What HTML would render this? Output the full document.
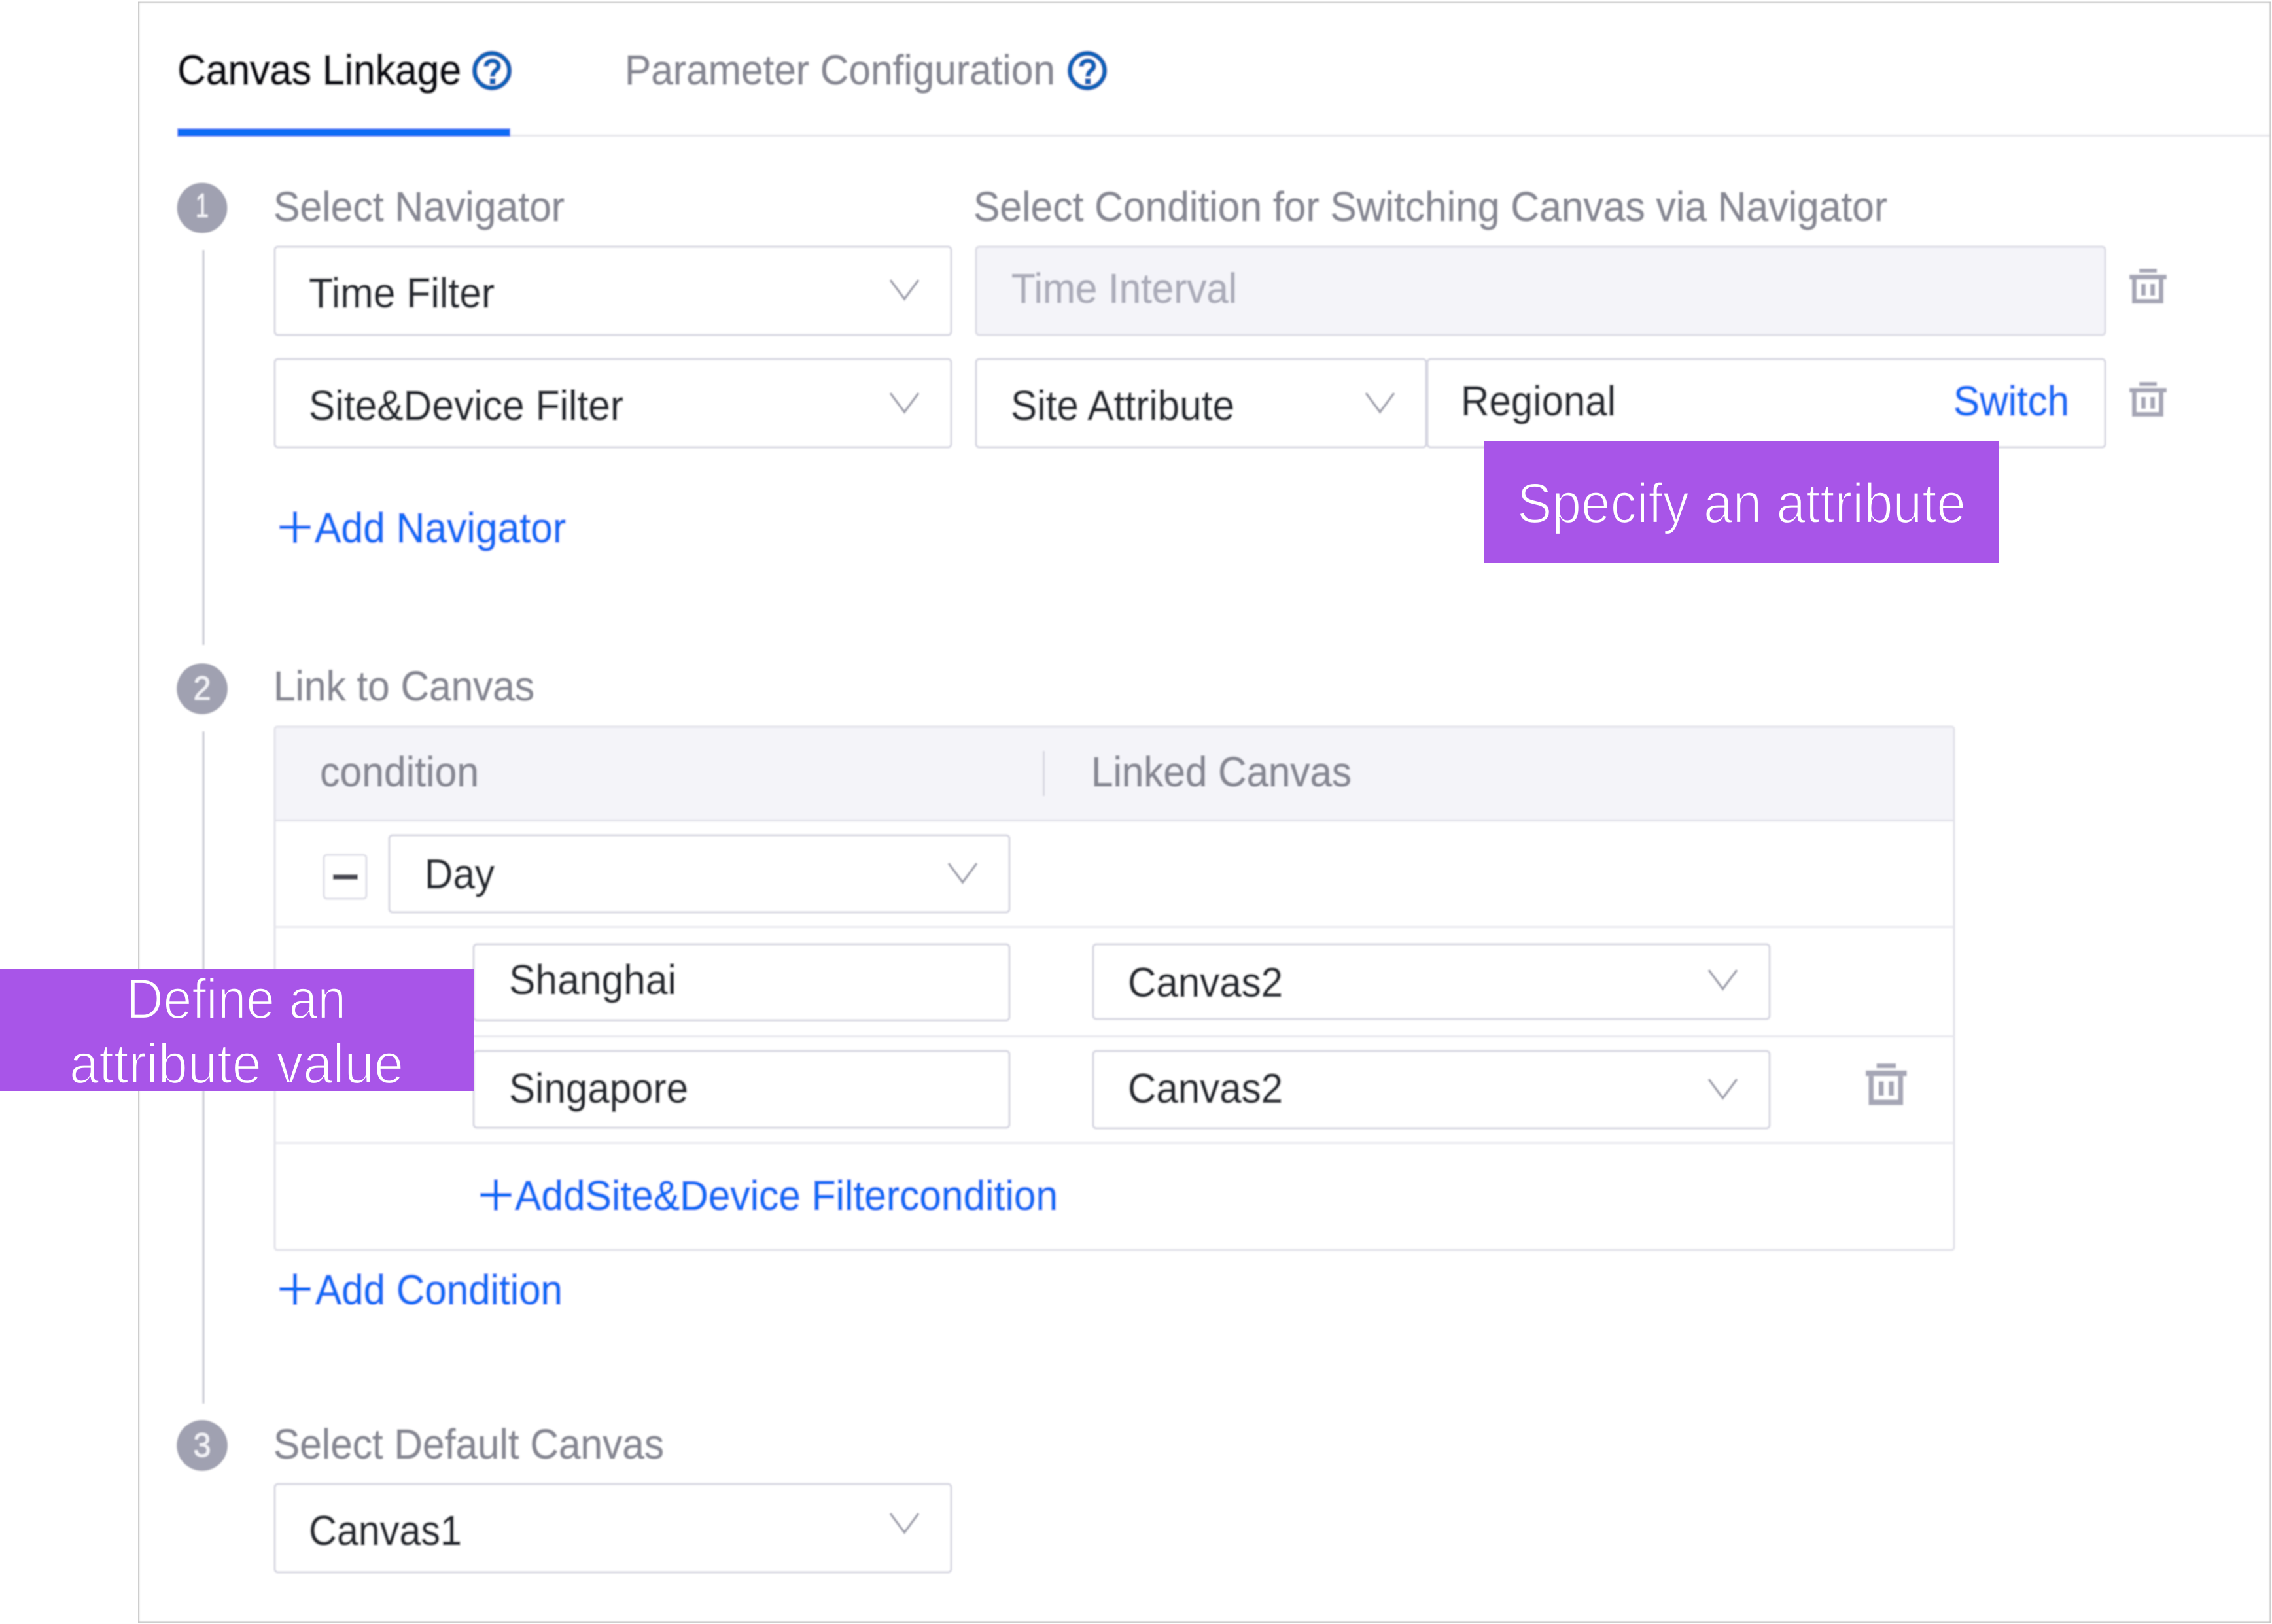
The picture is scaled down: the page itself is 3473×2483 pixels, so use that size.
<!DOCTYPE html>
<html lang="en">
<head>
<meta charset="utf-8">
<title>Canvas Linkage</title>
<style>
html,body{margin:0;padding:0;background:#fff;width:3473px;height:2483px;overflow:hidden}
svg{display:block}
text{font-family:"Liberation Sans",Arial,sans-serif;font-size:64px;white-space:pre}
.g{fill:#868793;stroke:#868793;stroke-width:.7px}
.d{fill:#282931;stroke:#282931;stroke-width:.8px}
.b{fill:#0a6cf5;stroke:#0a6cf5;stroke-width:1px}
.f{fill:#abacb9;stroke:#abacb9;stroke-width:.6px}
.box{fill:#fff;stroke:#d6d6e1;stroke-width:3}
.p{fill:#fff;font-size:86px;stroke:#a855e8;stroke-width:2.200px}
.n{fill:#f2f2f6;stroke:#f2f2f6;stroke-width:.8px;font-size:52px}
</style>
</head>
<body>
<svg xmlns="http://www.w3.org/2000/svg" width="3473" height="2483" viewBox="0 0 3473 2483">
<defs>
<filter id="soft" x="0" y="0" width="100%" height="100%" filterUnits="objectBoundingBox"><feGaussianBlur stdDeviation="1"/></filter>
<g id="chev"><path d="M0 0L21.500 29L43 0" fill="none" stroke="#9c9daa" stroke-width="3.500"/></g>
<g id="trash" fill="#a5a6b5">
<rect x="15" y="0" width="27" height="6"/>
<rect x="0" y="9" width="57" height="7"/>
<path fill-rule="evenodd" d="M4 16H52V53H4ZM11 16V46H45V16Z"/>
<rect x="18" y="23" width="7" height="18"/>
<rect x="32" y="23" width="7" height="18"/>
</g>
<g id="q">
<circle cx="0" cy="0" r="26.500" fill="none" stroke="#0a62b8" stroke-width="7.500"/>
<path d="M-9 -6C-9 -18 10 -18 10 -7C10 0 1 -1 1 9" fill="none" stroke="#0a62b8" stroke-width="7.500"/>
<rect x="-3.500" y="12" width="9" height="9" fill="#0a62b8"/>
</g>
<g id="plus"><path d="M-24 0H24M0 -24V24" stroke="#0a6cf5" stroke-width="6" fill="none"/></g>
</defs>

<rect width="3473" height="2483" fill="#fff"/>
<g filter="url(#soft)">
<!-- outer frame -->
<path d="M211 2.500H3471V2481H211Z" fill="#fff" stroke="#c4c4c4" stroke-width="3.500"/>

<!-- tabs -->
<rect x="780" y="206" width="2689" height="3" fill="#e6e6eb"/>
<rect x="271" y="196" width="509" height="13" fill="#0a6cf5"/>
<text x="271" y="129" fill="#0e0f13" textLength="434" lengthAdjust="spacingAndGlyphs" style="stroke:#0e0f13;stroke-width:1.500px">Canvas Linkage</text>
<use href="#q" x="752" y="108"/>
<text x="955" y="129" class="g" textLength="658" lengthAdjust="spacingAndGlyphs">Parameter Configuration</text>
<use href="#q" x="1662" y="108"/>

<!-- step lines -->
<rect x="309.500" y="382" width="3" height="604" fill="#c6c7d1"/>
<rect x="309.500" y="1118" width="3" height="1028" fill="#c6c7d1"/>

<!-- step 1 -->
<circle cx="309" cy="318" r="38.500" fill="#a0a1b1"/>
<text x="309" y="332" class="n" text-anchor="middle" textLength="20" lengthAdjust="spacingAndGlyphs">1</text>
<text x="418" y="338" class="g" textLength="445" lengthAdjust="spacingAndGlyphs">Select Navigator</text>
<text x="1488" y="338" class="g" textLength="1397" lengthAdjust="spacingAndGlyphs">Select Condition for Switching Canvas via Navigator</text>

<rect class="box" x="420" y="377" width="1034" height="135" rx="5"/>
<text x="472" y="470" class="d" textLength="284" lengthAdjust="spacingAndGlyphs">Time Filter</text>
<use href="#chev" x="1361" y="428"/>

<rect x="1492" y="377" width="1726" height="135" rx="5" fill="#f4f4f9" stroke="#dcdce5" stroke-width="3"/>
<text x="1546" y="463" class="f" textLength="345" lengthAdjust="spacingAndGlyphs">Time Interval</text>
<use href="#trash" x="3255" y="411"/>

<rect class="box" x="420" y="549" width="1034" height="135" rx="5"/>
<text x="472" y="642" class="d" textLength="481" lengthAdjust="spacingAndGlyphs">Site&amp;Device Filter</text>
<use href="#chev" x="1361" y="601"/>

<rect class="box" x="1492" y="549" width="688" height="135" rx="5"/>
<text x="1545" y="642" class="d" textLength="342" lengthAdjust="spacingAndGlyphs">Site Attribute</text>
<use href="#chev" x="2088" y="601"/>

<rect class="box" x="2182" y="549" width="1036" height="135" rx="5"/>
<text x="2233" y="635" class="d" textLength="237" lengthAdjust="spacingAndGlyphs">Regional</text>
<text x="2986" y="635" class="b" textLength="177" lengthAdjust="spacingAndGlyphs">Switch</text>
<use href="#trash" x="3255" y="584"/>

<use href="#plus" x="451" y="806"/>
<text x="481" y="829" class="b" textLength="384" lengthAdjust="spacingAndGlyphs">Add Navigator</text>

<!-- step 2 -->
<circle cx="309" cy="1053" r="39" fill="#a0a1b1"/>
<text x="309" y="1070" class="n" text-anchor="middle" textLength="27" lengthAdjust="spacingAndGlyphs">2</text>
<text x="418" y="1071" class="g" textLength="399" lengthAdjust="spacingAndGlyphs">Link to Canvas</text>

<!-- table -->
<rect x="420" y="1111" width="2567" height="800" rx="4" fill="#fff" stroke="#e1e1e9" stroke-width="3"/>
<path d="M421.500 1254V1115Q421.500 1112.500 425 1112.500H2982Q2985.500 1112.500 2985.500 1115V1254Z" fill="#f4f4f9"/>
<rect x="420" y="1253" width="2567" height="3" fill="#e1e1e9"/>
<rect x="420" y="1416" width="2567" height="3" fill="#e7e7ee"/>
<rect x="420" y="1583" width="2567" height="3" fill="#e7e7ee"/>
<rect x="420" y="1746" width="2567" height="3" fill="#e7e7ee"/>
<rect x="1594" y="1148" width="3" height="69" fill="#d8d8e1"/>
<text x="489" y="1202" class="g" textLength="243" lengthAdjust="spacingAndGlyphs">condition</text>
<text x="1668" y="1202" class="g" textLength="398" lengthAdjust="spacingAndGlyphs">Linked Canvas</text>

<rect x="495" y="1307" width="65" height="67" rx="5" fill="#fff" stroke="#dedee7" stroke-width="3"/>
<rect x="509" y="1337" width="38" height="8" fill="#44454f"/>
<rect class="box" x="595" y="1277" width="948" height="118" rx="5"/>
<text x="649" y="1358" class="d" textLength="107" lengthAdjust="spacingAndGlyphs">Day</text>
<use href="#chev" x="1450" y="1320"/>

<rect class="box" x="724" y="1444" width="819" height="116" rx="5"/>
<text x="778" y="1520" class="d" textLength="256" lengthAdjust="spacingAndGlyphs">Shanghai</text>
<rect class="box" x="1671" y="1444" width="1034" height="114" rx="5"/>
<text x="1724" y="1524" class="d" textLength="237" lengthAdjust="spacingAndGlyphs">Canvas2</text>
<use href="#chev" x="2612" y="1483"/>

<rect class="box" x="724" y="1607" width="819" height="117" rx="5"/>
<text x="778" y="1686" class="d" textLength="274" lengthAdjust="spacingAndGlyphs">Singapore</text>
<rect class="box" x="1671" y="1607" width="1034" height="118" rx="5"/>
<text x="1724" y="1686" class="d" textLength="237" lengthAdjust="spacingAndGlyphs">Canvas2</text>
<use href="#chev" x="2612" y="1650"/>
<use href="#trash" transform="translate(2852 1626) scale(1.100 1.200)"/>

<use href="#plus" x="758" y="1827"/>
<text x="787" y="1850" class="b" textLength="830" lengthAdjust="spacingAndGlyphs">AddSite&amp;Device Filtercondition</text>

<use href="#plus" x="451" y="1971"/>
<text x="482" y="1994" class="b" textLength="378" lengthAdjust="spacingAndGlyphs">Add Condition</text>

<!-- step 3 -->
<circle cx="309" cy="2210" r="39" fill="#a0a1b1"/>
<text x="309" y="2227" class="n" text-anchor="middle" textLength="27" lengthAdjust="spacingAndGlyphs">3</text>
<text x="418" y="2230" class="g" textLength="597" lengthAdjust="spacingAndGlyphs">Select Default Canvas</text>
<rect class="box" x="420" y="2269" width="1034" height="135" rx="5"/>
<text x="472" y="2362" class="d" textLength="234" lengthAdjust="spacingAndGlyphs">Canvas1</text>
<use href="#chev" x="1361" y="2314"/>
</g>

<!-- callouts -->
<rect x="2269" y="674" width="786" height="187" fill="#a855e8"/>
<text x="2319" y="799" class="p" textLength="686" lengthAdjust="spacingAndGlyphs">Specify an attribute</text>
<rect x="0" y="1481" width="724" height="187" fill="#a855e8"/>
<text x="193" y="1557" class="p" textLength="336" lengthAdjust="spacingAndGlyphs">Define an</text>
<text x="106" y="1656" class="p" textLength="511" lengthAdjust="spacingAndGlyphs">attribute value</text>
</svg>
</body>
</html>
